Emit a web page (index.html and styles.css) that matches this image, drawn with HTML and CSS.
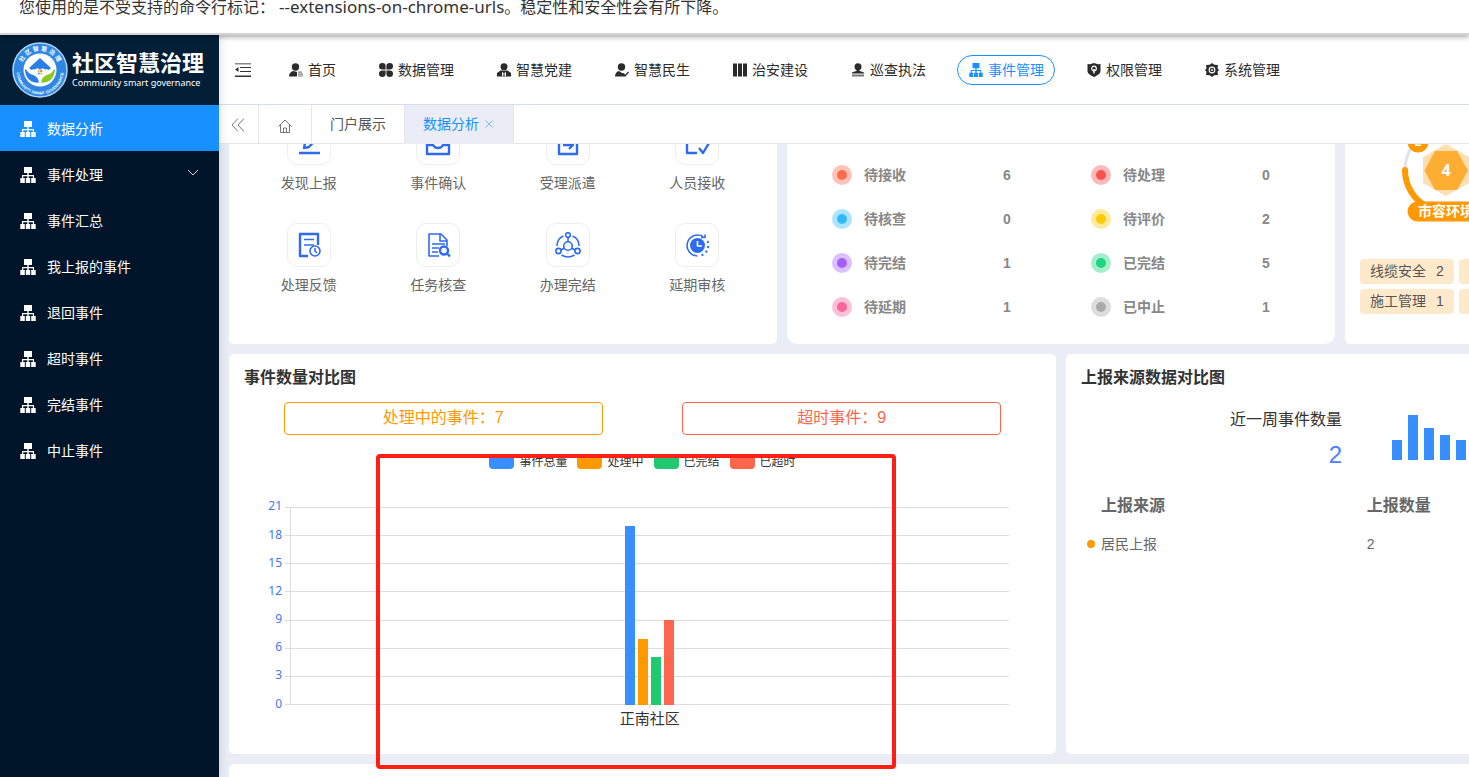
FILE: index.html
```html
<!DOCTYPE html>
<html lang="zh-CN">
<head>
<meta charset="utf-8">
<title>社区智慧治理</title>
<link rel="stylesheet" href="styles.css">
</head>
<body>
<svg class="sprite" aria-hidden="true">
  <symbol id="i-org" viewBox="0 0 16 16"><path fill="currentColor" d="M4 0h8v6H8.700v2H14v3h1.700v5h-4.500v-5h1.700V9.200H8.700V11h1.500v5H5.800v-5h1.500V9.200H3.200V11h1.600v5H.3v-5H2V8h5.300V6H4z"/></symbol>
  <symbol id="i-user-list" viewBox="0 0 14 14"><g fill="currentColor"><circle cx="6.500" cy="4" r="3.700"/><path d="M0 13.500c0-3.500 2-5 4.500-5.500L8 9v4.500z"/><path opacity=".6" d="M9 8.500h4v1.200H9zM9 10.500h5v1.200H9zM9 12.400h5v1.200H9z"/></g></symbol>
  <symbol id="i-clover" viewBox="0 0 14 14"><path fill="currentColor" d="M3.300 0A3.200 3.200 0 0 1 6.600 3.300v3.300H3.300a3.300 3.300 0 0 1 0-6.600zM10.700 0a3.300 3.300 0 0 1 0 6.600H7.400V3.300A3.300 3.300 0 0 1 10.700 0zM3.300 7.400h3.300v3.300a3.300 3.300 0 1 1-3.300-3.300zM7.400 7.400h3.300a3.300 3.300 0 1 1-3.300 3.300z"/></symbol>
  <symbol id="i-user-tie" viewBox="0 0 14 14"><circle fill="currentColor" cx="7" cy="3.800" r="3.500"/><path fill="currentColor" fill-rule="evenodd" d="M0 13.500V10l3.500-2.500h7L14 10v3.500zM5 9v4h1.300l.3-3zM9 9v4H7.700l-.3-3z"/></symbol>
  <symbol id="i-user-check" viewBox="0 0 14 14"><circle fill="currentColor" cx="6.500" cy="4" r="3.700"/><path fill="currentColor" d="M0 13.500c0-3.500 2-5 4-5.500L7 10l2 .2 1 3.300z"/><path fill="none" stroke="currentColor" stroke-width="1.300" d="M8.500 11l1.700 1.700L13.500 9"/></symbol>
  <symbol id="i-columns" viewBox="0 0 14 14"><path fill="currentColor" d="M0 .5h4v13H0zM5 .5h4v13H5zM10 .5h4v13h-4z"/></symbol>
  <symbol id="i-stamp" viewBox="0 0 14 14"><g fill="currentColor"><circle cx="7" cy="3.700" r="3.500"/><path d="M5.500 6h3v2c2.500.5 4.500 1 5 2.500H.5C1 9 3 8.500 5.500 8z"/><path opacity=".65" d="M1 11.500h12v2H1z"/></g></symbol>
  <symbol id="i-shield" viewBox="0 0 14 14"><path fill="currentColor" d="M.5 1l2.500.3L7 0l4 1.300 2.500-.3v7c0 3-3.500 4.500-6.500 6C4 12.500.5 11 .5 8z"/><circle cx="7" cy="5.500" r="2.300" fill="none" stroke="#fff" stroke-width="1.200"/><path stroke="#fff" stroke-width="1.400" d="M7 6v4.500"/></symbol>
  <symbol id="i-gear" viewBox="0 0 14 14"><path fill="currentColor" fill-rule="evenodd" d="M7 0l2.300 1.800 3.700.2-.5 3.200L14 7l-1.500 1.800.5 3.200-3.700.2L7 14l-2.300-1.800L1 12l.5-3.200L0 7l1.500-1.800L1 2l3.700-.2zM7 3.600a3.400 3.400 0 1 0 0 6.800 3.400 3.400 0 0 0 0-6.800z"/><circle cx="7" cy="7" r="1.600" fill="none" stroke="currentColor" stroke-width="1.300"/></symbol>
</svg>

<p class="notice">您使用的是不受支持的命令行标记：<span class="flag">--extensions-on-chrome-urls</span>。稳定性和安全性会有所下降。</p>

<div class="app">
  <aside class="sidebar">
    <div class="brand">
      <svg class="brand-mark" viewBox="0 0 56 56" aria-hidden="true">
        <defs>
          <path id="arc-top" d="M9.500 33A19.200 19.200 0 1 1 46.500 33"/>
          <path id="arc-bottom" d="M4.500 29A23.500 23.500 0 0 0 51.500 29"/>
        </defs>
        <circle cx="28" cy="28" r="27" fill="#2f86e4" stroke="#a9d4fb" stroke-width="1.500"/>
        <circle cx="28" cy="28" r="16.500" fill="#fff"/>
        <text class="mark-cn"><textPath href="#arc-top" startOffset="50%">社 区 智 慧 治 理</textPath></text>
        <text class="mark-en"><textPath href="#arc-bottom" startOffset="50%">COMMUNITY SMART GOVERNANCE</textPath></text>
        <path fill="#2a7fe6" d="M28 16l11 10-2.500 2-2.500-1-6 7-6-7-2.500 1-2.500-2z"/>
        <path fill="#fff" d="M28 36l-5-5c-2-4 3-6 5-3 2-3 7-1 5 3z"/>
        <path fill="#f7c531" d="M25.800 28h2v2h-2zM28.300 30.500h2v2h-2z"/>
        <path fill="#e9694a" d="M28.300 28h2v2h-2z"/><path fill="#4db1ef" d="M25.800 30.500h2v2h-2z"/>
        <path fill="#2a7fe6" d="M13 27c2 1 3 4 5.500 5 3 1 7.500 2 8.500 8.500C20 41.500 13 37 13 27z"/>
        <path fill="#8ac926" d="M43 27c-2 1-3 4-5.500 5-3 1-7.500 2-8.500 8.500C36 41.500 43 37 43 27z"/>
      </svg>
      <div class="brand-text">
        <strong class="brand-name">社区智慧治理</strong>
        <span class="brand-sub">Community smart governance</span>
      </div>
    </div>
    <nav class="menu">
      <a class="menu-item active" href="#"><svg class="icon16"><use href="#i-org"/></svg>数据分析</a>
      <a class="menu-item" href="#"><svg class="icon16"><use href="#i-org"/></svg>事件处理<svg class="chevron" viewBox="0 0 12 7"><path d="M1 1l5 5 5-5"/></svg></a>
      <a class="menu-item" href="#"><svg class="icon16"><use href="#i-org"/></svg>事件汇总</a>
      <a class="menu-item" href="#"><svg class="icon16"><use href="#i-org"/></svg>我上报的事件</a>
      <a class="menu-item" href="#"><svg class="icon16"><use href="#i-org"/></svg>退回事件</a>
      <a class="menu-item" href="#"><svg class="icon16"><use href="#i-org"/></svg>超时事件</a>
      <a class="menu-item" href="#"><svg class="icon16"><use href="#i-org"/></svg>完结事件</a>
      <a class="menu-item" href="#"><svg class="icon16"><use href="#i-org"/></svg>中止事件</a>
    </nav>
  </aside>

  <div class="main">
    <header class="topbar">
      <button class="fold" type="button" aria-label="收起菜单">
        <svg class="icon16" viewBox="0 0 16 16"><path fill="#888" d="M0 1h16v1.500H0z"/><path fill="#333" d="M5 5h11v1H5zM5 9h11v1H5zM0 13.500h16V15H0zM0 7.500L3.500 5v5z"/></svg>
      </button>
      <nav class="topnav">
        <a class="topnav-item" href="#"><svg class="icon14"><use href="#i-user-list"/></svg>首页</a>
        <a class="topnav-item" href="#"><svg class="icon14"><use href="#i-clover"/></svg>数据管理</a>
        <a class="topnav-item" href="#"><svg class="icon14"><use href="#i-user-tie"/></svg>智慧党建</a>
        <a class="topnav-item" href="#"><svg class="icon14"><use href="#i-user-check"/></svg>智慧民生</a>
        <a class="topnav-item" href="#"><svg class="icon14"><use href="#i-columns"/></svg>治安建设</a>
        <a class="topnav-item" href="#"><svg class="icon14"><use href="#i-stamp"/></svg>巡查执法</a>
        <a class="topnav-item active" href="#"><svg class="icon14"><use href="#i-org"/></svg>事件管理</a>
        <a class="topnav-item" href="#"><svg class="icon14"><use href="#i-shield"/></svg>权限管理</a>
        <a class="topnav-item" href="#"><svg class="icon14"><use href="#i-gear"/></svg>系统管理</a>
      </nav>
    </header>

    <div class="tabs">
      <button class="tab tab-back" type="button" aria-label="向左滚动"><svg class="icon14" viewBox="0 0 14 14"><path d="M7 .5L1 7l6 6.500M13 .5L7 7l6 6.500"/></svg></button>
      <button class="tab tab-home" type="button" aria-label="主页"><svg class="icon14" viewBox="0 0 14 14"><path d="M.5 7.500L7 1l6.500 6.500M2.500 6v7.500h9V6M5.500 13.500V9h3v4.500"/></svg></button>
      <button class="tab" type="button">门户展示</button>
      <button class="tab active" type="button">数据分析<svg class="close" viewBox="0 0 8 8"><path d="M.5.5l7 7M7.500.5l-7 7"/></svg></button>
    </div>

    <main class="viewport">
      <div class="board">
        <div class="row thirds">
          <section class="card shortcuts">
            <a class="shortcut" href="#"><span class="tile"><svg viewBox="0 0 26 26"><path d="M3 23h21M8 18l1-5 9-10 4 4-9 10z"/></svg></span>发现上报</a>
            <a class="shortcut" href="#"><span class="tile"><svg viewBox="0 0 26 26"><path d="M6 5h14l4 9v10H2V14zM2 15h6c1 2 2 3 5 3s4-1 5-3h6"/></svg></span>事件确认</a>
            <a class="shortcut" href="#"><span class="tile"><svg viewBox="0 0 26 26"><path d="M4 5h18v19H4zM8 15h9M14 11l4 4-4 4"/></svg></span>受理派遣</a>
            <a class="shortcut" href="#"><span class="tile"><svg viewBox="0 0 26 26"><path d="M13 23H3V3h19v7M15 18l4 5 6-10"/></svg></span>人员接收</a>
            <a class="shortcut" href="#"><span class="tile"><svg viewBox="0 0 26 26"><path d="M12 24H4V2h18v11"/><path class="thin" d="M8 7.500h10M8 13h10"/><circle class="thin" cx="19" cy="19" r="5"/><path class="thin" d="M19 16v3l2 2"/></svg></span>处理反馈</a>
            <a class="shortcut" href="#"><span class="tile"><svg viewBox="0 0 26 26"><path class="thin" d="M14 24H4V2h12l6 6v6M15 2v7h7M7 12h13M7 16h7M7 20h6"/><circle cx="19" cy="18.500" r="4"/><path d="M22 21.500l3 3"/></svg></span>任务核查</a>
            <a class="shortcut" href="#"><span class="tile"><svg viewBox="0 0 26 26"><g class="thin"><circle cx="13" cy="3" r="2.300"/><circle cx="3.500" cy="19" r="2.600"/><circle cx="22.500" cy="19" r="2.600"/><circle cx="13" cy="14" r="4.300"/><path d="M13 5.500v4M9.300 16.300L6 18M16.700 16.300L20 18M2 14C2 9.500 4.500 5.500 8.500 4M24 14c0-4.500-2.500-8.500-6.500-10M6.500 23c4 2.500 9 2.500 13 0"/></g></svg></span>办理完结</a>
            <a class="shortcut" href="#"><span class="tile"><svg viewBox="0 0 26 26"><circle cx="13.500" cy="13.500" r="7.500" fill="#2f6bf0" stroke="none"/><path class="thin" d="M19 4.500A10.500 10.500 0 1 0 13.500 24M17 5.500h4v-3"/><path class="thin dots" d="M23.500 9A11 11 0 0 1 15 24"/><path class="hand" d="M13.500 9v5h4.500"/></svg></span>延期审核</a>
          </section>

          <section class="card statuses">
            <dl class="status-grid">
              <div class="status red-orange"><dt>待接收</dt><dd>6</dd></div>
              <div class="status red"><dt>待处理</dt><dd>0</dd></div>
              <div class="status sky"><dt>待核查</dt><dd>0</dd></div>
              <div class="status yellow"><dt>待评价</dt><dd>2</dd></div>
              <div class="status purple"><dt>待完结</dt><dd>1</dd></div>
              <div class="status green"><dt>已完结</dt><dd>5</dd></div>
              <div class="status pink"><dt>待延期</dt><dd>1</dd></div>
              <div class="status gray"><dt>已中止</dt><dd>1</dd></div>
            </dl>
          </section>

          <section class="card categories">
            <svg class="gauge" viewBox="0 0 96 106">
              <path fill="none" stroke="#dfe4ec" stroke-width="3" d="M7 54A41 41 0 1 1 89 54"/>
              <path fill="none" stroke="#ff9900" stroke-width="6" stroke-linecap="round" d="M7 54A41 41 0 0 0 30 91"/>
              <path fill="#ffdfb2" d="M48 28l23 13v26L48 80 25 67V41z"/>
              <path fill="#ffad33" d="M37 35h22l11 19.500L59 74H37L26.500 54.500z"/>
              <text class="gauge-value" x="48" y="60">4</text>
              <circle cx="20" cy="26" r="10.500" fill="#ff9900"/>
              <text class="gauge-rank" x="20" y="30">2</text>
              <rect x="9.500" y="85.500" width="77" height="20" rx="10" fill="#ff9900"/>
              <text class="gauge-label" x="48" y="100">市容环境</text>
            </svg>
            <ul class="tags">
              <li class="tag"><span>线缆安全</span><span>2</span></li>
              <li class="tag"></li>
              <li class="tag"><span>施工管理</span><span>1</span></li>
              <li class="tag"></li>
            </ul>
          </section>
        </div>

        <div class="row halves">
          <section class="card panel">
            <h2 class="panel-title">事件数量对比图</h2>
            <div class="totals">
              <div class="total orange">处理中的事件：7</div>
              <div class="total coral">超时事件：9</div>
            </div>
            <ul class="legend">
              <li class="fill-blue">事件总量</li>
              <li class="fill-orange">处理中</li>
              <li class="fill-green">已完结</li>
              <li class="fill-coral">已超时</li>
            </ul>
            <svg class="chart" role="img" aria-label="正南社区事件数量">
              <g class="grid">
                <path d="M46.500 35v198"/>
                <line x1="41" x2="96%" y1="35.500" y2="35.500"/><line x1="41" x2="96%" y1="63.500" y2="63.500"/>
                <line x1="41" x2="96%" y1="91.500" y2="91.500"/><line x1="41" x2="96%" y1="119.500" y2="119.500"/>
                <line x1="41" x2="96%" y1="148.500" y2="148.500"/><line x1="41" x2="96%" y1="176.500" y2="176.500"/>
                <line x1="41" x2="96%" y1="204.500" y2="204.500"/><line x1="41" x2="96%" y1="232.500" y2="232.500"/>
              </g>
              <g class="ticks">
                <text x="38" y="38">21</text><text x="38" y="67">18</text><text x="38" y="95">15</text><text x="38" y="123">12</text>
                <text x="38" y="151">9</text><text x="38" y="179">6</text><text x="38" y="207">3</text><text x="38" y="236">0</text>
              </g>
              <svg x="50.9%" overflow="visible">
                <g class="bars">
                  <rect x="-25" y="54" width="10" height="179" fill="#388fff"/>
                  <rect x="-12" y="167" width="10" height="66" fill="#ff9900"/>
                  <rect x="1" y="185" width="10" height="48" fill="#20c970"/>
                  <rect x="14" y="148" width="10" height="85" fill="#fc664d"/>
                  <rect x="-1" y="233" width="1" height="4" fill="#ddd"/>
                </g>
                <text class="category" x="0" y="252">正南社区</text>
              </svg>
            </svg>
            <div class="annotation"></div>
          </section>

          <section class="card panel">
            <h2 class="panel-title">上报来源数据对比图</h2>
            <div class="weekly">
              <div class="weekly-text">
                <div class="weekly-label">近一周事件数量</div>
                <div class="weekly-value">2</div>
              </div>
              <svg class="weekly-bars" width="74" height="45" viewBox="0 0 74 45" aria-hidden="true"><path fill="#388fff" d="M0 25h10v20H0zM16 0h10v45H16zM32 13h10v32H32zM48 20h10v25H48zM64 25h10v20H64z"/></svg>
            </div>
            <table class="sources">
              <thead><tr><th>上报来源</th><th>上报数量</th><th></th></tr></thead>
              <tbody><tr><td class="source-name">居民上报</td><td>2</td><td></td></tr></tbody>
            </table>
          </section>
        </div>

        <div class="row"><section class="card next"></section></div>
      </div>
    </main>
  </div>
</div>
</body>
</html>
```
FILE: styles.css
```css
*, *::before { box-sizing: border-box; }

body {
  margin: 0;
  height: 100vh;
  overflow: hidden;
  display: flex;
  flex-direction: column;
  font: 14px/20px "Liberation Sans", "Noto Sans CJK SC", sans-serif;
  color: #333;
}

a { color: inherit; text-decoration: none; }
button { font: inherit; color: inherit; border: 0; background: none; padding: 0; }
ul, dl, dd, p, h2 { margin: 0; padding: 0; list-style: none; }

.sprite { position: absolute; width: 0; height: 0; }
.icon14 { width: 14px; height: 14px; flex: none; }
.icon16 { width: 16px; height: 16px; flex: none; }

.notice {
  flex: none;
  height: 35px;
  padding: 0 19px;
  border-bottom: 2px solid #d4d4d8;
  background: #fff;
  box-shadow: 0 2px 5px rgba(0, 0, 0, .35);
  font: 16px/14px "Noto Sans", "Noto Sans CJK SC", sans-serif;
  white-space: nowrap;
  position: relative;
  z-index: 3;
}
.flag { margin-left: 4px; font-size: 17px; }

.app { flex: 1; min-height: 0; display: flex; }

.sidebar {
  flex: none;
  width: 219px;
  background: #001529;
  color: #fff;
  box-shadow: 2px 0 8px rgba(29, 35, 41, .12);
  position: relative;
  z-index: 2;
}
.brand {
  height: 70px;
  padding-left: 12px;
  display: flex;
  align-items: center;
  gap: 4px;
  background: #031f38;
}
.brand-mark { width: 56px; height: 56px; flex: none; }
.brand-text { display: flex; flex-direction: column; white-space: nowrap; }
.brand-name { font-size: 22px; line-height: 26px; }
.brand-sub { font: 9px/12px "Noto Sans", sans-serif; }
.mark-cn, .mark-en { fill: #fff; text-anchor: middle; font-weight: 700; }
.mark-cn { font-size: 6px; }
.mark-en { font-size: 4px; }

.menu-item {
  height: 46px;
  padding: 2px 20px 0;
  display: flex;
  align-items: center;
  gap: 11px;
}
.menu-item.active { background: #1890ff; }
.chevron { width: 12px; height: 7px; margin-left: auto; margin-bottom: 6px; fill: none; stroke: #cfd5dc; }

.main { flex: 1; min-width: 0; display: flex; flex-direction: column; }

.topbar {
  flex: none;
  height: 70px;
  padding-left: 16px;
  display: flex;
  align-items: center;
  border-bottom: 1px solid #d8dce8;
  background: #fff;
}
.fold { display: flex; }
.topnav { display: flex; gap: 20px; margin-left: 26px; white-space: nowrap; }
.topnav-item {
  height: 30px;
  padding: 0 10px 0 11px;
  display: flex;
  align-items: center;
  gap: 5px;
  border: 1px solid transparent;
  border-radius: 15px;
  color: #2b2b2b;
}
.topnav-item.active { border-color: #1890ff; color: #1890ff; }

.tabs {
  flex: none;
  height: 39px;
  display: flex;
  background: linear-gradient(#e4e6ea, #e4e6ea) bottom / 100% 1px no-repeat #fff;
}
.tab {
  display: flex;
  align-items: center;
  gap: 6px;
  padding: 0 18px 2px;
  border-right: 1px solid #e4e6ea;
  color: #555;
  white-space: nowrap;
}
.tab svg { fill: none; stroke: #777; }
.tab-back { padding: 0 13px 0 12px; }
.tab-home { padding: 2px 19px 0; }
.tab.active { padding-right: 20px; background: #eaedf6; color: #1890ff; }
.tab.active .close { width: 8px; height: 8px; stroke: #7fb4f5; }

.viewport { flex: 1; min-height: 0; overflow: hidden; background: #eaedf6; }
/* The board is scrolled down by 60px and runs past the right edge. */
.board {
  min-width: 1684px;
  margin-top: -60px;
  padding: 0 10px;
  display: flex;
  flex-direction: column;
  gap: 10px;
}
.row { display: grid; gap: 10px; }
.thirds { grid-template-columns: repeat(3, 1fr); grid-auto-rows: 260px; }
.halves { grid-template-columns: repeat(2, 1fr); grid-auto-rows: 400px; }
.card { background: #fff; border-radius: 5px; padding: 15px; }
.next { height: 100px; }

.shortcuts {
  display: grid;
  grid-template-columns: repeat(4, 1fr);
  row-gap: 30px;
  align-content: end;
  padding-bottom: 49px;
}
.shortcut { display: flex; flex-direction: column; align-items: center; gap: 8px; color: #666; }
.tile {
  width: 44px;
  height: 44px;
  display: flex;
  align-items: center;
  justify-content: center;
  border: 1px solid #eee;
  border-radius: 10px;
}
.tile svg { width: 26px; height: 26px; fill: none; stroke: #2f6bf0; stroke-width: 2.400; stroke-linejoin: round; }
.tile .thin { stroke-width: 1.600; }
.tile .dots { stroke-width: 2; stroke-dasharray: 2 3; }
.tile .hand { stroke: #fff; stroke-width: 1.600; }

.statuses { display: flex; flex-direction: column; justify-content: flex-end; border-radius: 10px; }
.status-grid { display: grid; grid-template-columns: 1fr 1fr; }
.status {
  height: 44px;
  padding-left: 30px;
  display: flex;
  align-items: center;
  font-weight: 700;
  color: #888;
}
.status::before {
  content: "";
  width: 20px;
  height: 20px;
  margin-right: 12px;
  border: 5px solid var(--ring);
  border-radius: 50%;
  background: var(--dot);
}
.status dt { width: 139px; }
.red-orange { --dot: #fd6b4d; --ring: #fec3b8; }
.red { --dot: #fd5050; --ring: #feb9b9; }
.sky { --dot: #31b9fd; --ring: #ade3fe; }
.yellow { --dot: #fdca04; --ring: #feea9b; }
.purple { --dot: #a55efd; --ring: #dbbffe; }
.green { --dot: #1dd480; --ring: #a5eecc; }
.pink { --dot: #fb6499; --ring: #fdc1d7; }
.gray { --dot: #aaa; --ring: #ddd; }

.categories { display: flex; flex-direction: column; justify-content: flex-end; padding-bottom: 30px; }
.gauge { width: 96px; height: 106px; margin-left: 38px; margin-bottom: 37px; overflow: visible; }
.gauge text { fill: #fff; text-anchor: middle; font-weight: 700; }
.gauge-value { font-size: 16px; font-family: "Noto Sans", sans-serif; }
.gauge-rank { font-size: 12px; }
.gauge-label { font-size: 14px; }
.tags { display: grid; grid-template-columns: max-content max-content; gap: 5px; }
.tag {
  min-width: 94px;
  height: 25px;
  padding: 0 10px 2px;
  display: flex;
  align-items: center;
  gap: 10px;
  border-radius: 4px;
  background: #ffe9cb;
  color: #555;
}

.panel { position: relative; padding-top: 14px; }
.panel-title { font-size: 16px; line-height: 20px; }

.totals { display: grid; grid-template-columns: 1fr 1fr; margin-top: 14px; }
.total {
  width: 80%;
  margin: 0 auto;
  padding-bottom: 2px;
  border: 1px solid;
  border-radius: 4px;
  text-align: center;
  font-size: 16px;
  line-height: 29px;
}
.total.orange { color: #ff9900; }
.total.coral { color: #fc664d; }

.legend { display: flex; justify-content: center; gap: 10px; margin-top: 17px; }
.legend li { display: flex; align-items: center; gap: 5px; font-size: 12px; line-height: 20px; }
.legend li::before { content: ""; width: 25px; height: 14px; border-radius: 4px; background: var(--fill); }
.fill-blue { --fill: #388fff; }
.fill-orange { --fill: #ff9900; }
.fill-green { --fill: #20c970; }
.fill-coral { --fill: #fc664d; }

.chart { display: block; width: 100%; height: 260px; }
.grid { stroke: #ddd; fill: none; shape-rendering: crispEdges; }
.bars { shape-rendering: crispEdges; }
.ticks { font: 12px "Noto Sans", sans-serif; fill: #3f78ee; text-anchor: end; }
.category { font-size: 15px; text-anchor: middle; fill: #333; }

/* Hand-drawn highlight frame that lies over the chart. */
.annotation {
  position: absolute;
  left: 147px;
  top: 100px;
  width: 520px;
  height: 315px;
  border: 4px solid #ff1f14;
  border-radius: 4px;
}

.weekly { display: grid; grid-template-columns: 261px auto; column-gap: 50px; margin-top: 19px; }
.weekly-text { text-align: right; }
.weekly-label { font-size: 16px; line-height: 26px; }
.weekly-value { font-size: 24px; line-height: 44px; color: #4a80ff; }
.weekly-bars { margin-top: 8px; }

.sources { width: 100%; margin-top: 10px; table-layout: fixed; border-collapse: collapse; color: #666; }
.sources th, .sources td { padding: 0 0 0 20px; text-align: left; height: 38px; }
.sources th { font-size: 16px; }
.source-name::before {
  content: "";
  display: inline-block;
  width: 8px;
  height: 8px;
  margin: 0 6px 1px -14px;
  border-radius: 50%;
  background: #ff9900;
}
```
